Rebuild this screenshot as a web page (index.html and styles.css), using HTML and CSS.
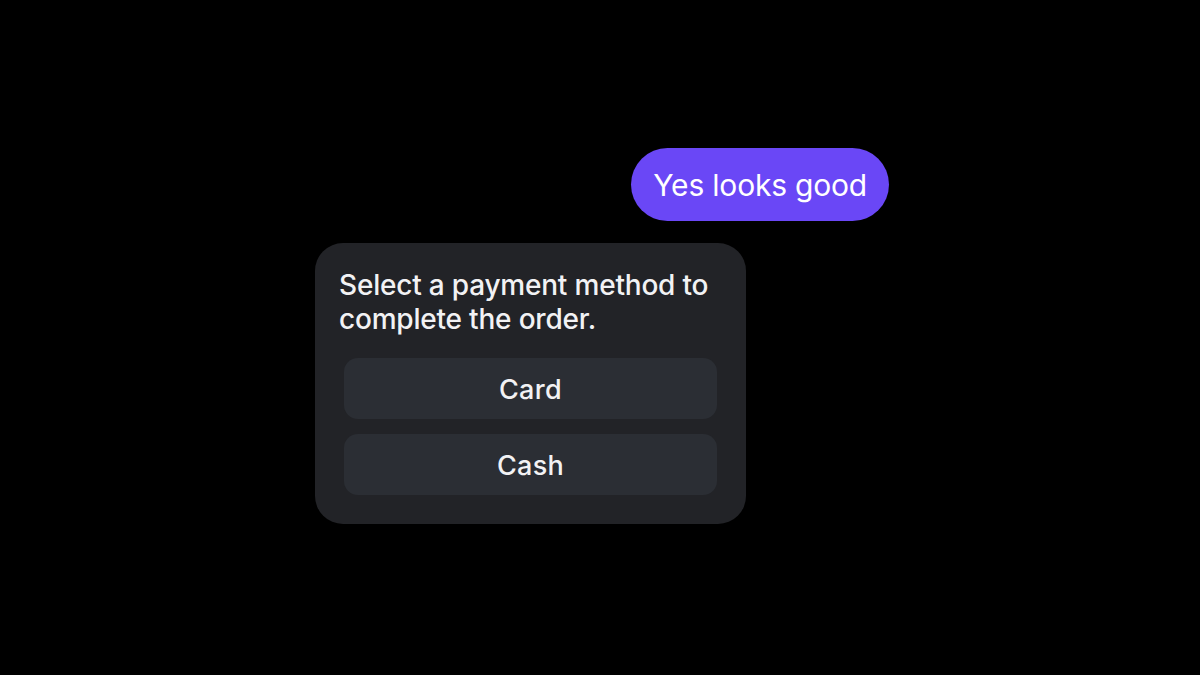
FILE: index.html
```html
<!DOCTYPE html>
<html>
<head>
<meta charset="utf-8">
<link rel="stylesheet" href="styles.css">
</head>
<body>
<div class="chat">
  <div class="bubble">Yes looks good</div>
  <div class="card">
    <p class="prompt">Select a payment method to complete the order.</p>
    <div class="options">
      <button class="option">Card</button>
      <button class="option">Cash</button>
    </div>
  </div>
</div>
</body>
</html>
```
FILE: styles.css
```css
html, body {
  margin: 0;
  padding: 0;
  background: #000;
  width: 1200px;
  height: 675px;
  overflow: hidden;
}
body {
  font-family: Inter, "Noto Sans", sans-serif;
  color: #f2f2f4;
}
.chat {
  width: 574px;
  margin-left: 315px;
  padding-top: 148px;
  display: flex;
  flex-direction: column;
  gap: 22px;
}
.bubble {
  align-self: flex-end;
  background: #6a47f6;
  color: #fff;
  height: 73px;
  box-sizing: border-box;
  padding: 0 22px;
  border-radius: 37px;
  display: flex;
  align-items: center;
  font-size: 30px;
  font-weight: 400;
  letter-spacing: -0.2px;
}
.card {
  align-self: flex-start;
  width: 431px;
  height: 281px;
  box-sizing: border-box;
  background: #222327;
  border-radius: 28px;
  padding: 25px 29px 29px;
  display: flex;
  flex-direction: column;
}
.prompt {
  margin: 0 -20px 0 -5px;
  font-size: 28px;
  line-height: 34px;
  font-weight: 500;
  letter-spacing: -0.2px;
}
.options {
  margin-top: auto;
  display: flex;
  flex-direction: column;
  gap: 15px;
}
.option {
  height: 61px;
  border: none;
  border-radius: 14px;
  background: #2b2e34;
  color: #f2f2f4;
  font-family: inherit;
  font-size: 27px;
  font-weight: 500;
  letter-spacing: 0.3px;
  padding: 2px 0 0;
}
```
